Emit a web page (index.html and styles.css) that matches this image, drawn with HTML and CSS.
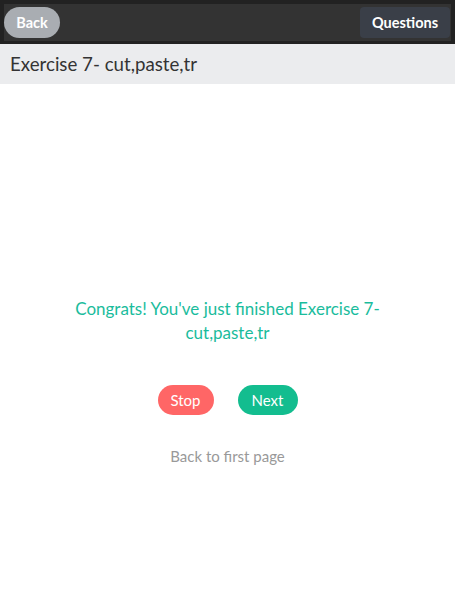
FILE: index.html
```html
<!DOCTYPE html>
<html>
<head>
<meta charset="utf-8">
<link rel="stylesheet" href="styles.css">
</head>
<body>
<div class="topbar">
  <div class="topbar-inner">
    <button class="btn-back">Back</button>
    <button class="btn-questions">Questions</button>
  </div>
</div>
<div class="titlebar">Exercise 7- cut,paste,tr</div>
<main class="content">
  <p class="congrats">Congrats! You've just finished Exercise 7-cut,paste,tr</p>
  <div class="actions">
    <button class="btn-stop">Stop</button>
    <button class="btn-next">Next</button>
  </div>
  <a class="first-page">Back to first page</a>
</main>
</body>
</html>
```
FILE: styles.css
```css
* { box-sizing: border-box; }
html, body { margin: 0; padding: 0; background: #fff; }
body { font-family: Lato, "Open Sans", sans-serif; width: 455px; height: 591px; overflow: hidden; }
.topbar { background: #222; padding: 4px 4px 3px 4px; height: 44px; }
.topbar-inner { background: #333; height: 37px; display: flex; justify-content: space-between; align-items: center; padding: 0; }
button { font-family: Lato, sans-serif; border: none; cursor: pointer; }
.btn-back { background: #a9adb2; color: #fff; font-size: 14.5px; font-weight: bold; height: 31px; width: 56px; border-radius: 16px; padding: 0; }
.btn-questions { background: #3a3f48; color: #fff; font-size: 14.5px; font-weight: bold; height: 31px; width: 90px; border-radius: 4px; padding: 0; margin-right: 1px; }
.titlebar { background: #ebecee; height: 40px; padding: 0 10px; font-size: 18.7px; color: #333; display: flex; align-items: center; }
.content { display: flex; flex-direction: column; align-items: center; padding-top: 213px; }
.congrats { margin: 0; width: 330px; text-align: center; color: #1abc9c; font-size: 17px; line-height: 24px; }
.actions { display: flex; gap: 24px; margin-top: 40px; }
.btn-stop, .btn-next { color: #fff; font-size: 15px; height: 30px; border-radius: 15px; padding: 0; }
.btn-stop { background: #ff6666; width: 56px; }
.btn-next { background: #13bd8f; width: 60px; }
.first-page { margin-top: 32px; color: #999; font-size: 15px; }
```
